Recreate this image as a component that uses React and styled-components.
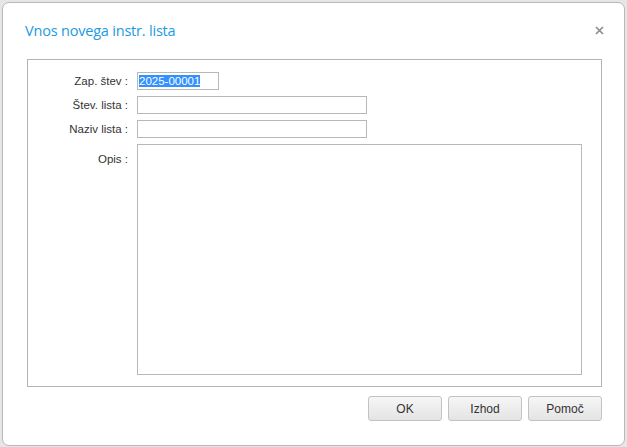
import React, { useEffect, useRef } from "react";
import styled, { createGlobalStyle } from "styled-components";

const GlobalStyle = createGlobalStyle`
  html, body {
    margin: 0;
    padding: 0;
    background: #e6e6e6;
  }
  body {
    font-family: "Liberation Sans", Arial, sans-serif;
    font-size: 11px;
    color: #333;
  }
  * { box-sizing: border-box; }
`;

const Dialog = styled.div`
  margin: 2px 0 0 2px;
  width: 623px;
  height: 444px;
  background: #fff;
  border: 1px solid #b9b9b9;
  border-radius: 7px;
  display: flex;
  flex-direction: column;
  padding: 0 22px 0 24px;
`;

const Header = styled.div`
  height: 56px;
  display: flex;
  align-items: center;
  justify-content: space-between;
  padding-bottom: 2px;
`;

const Title = styled.h1`
  margin: 0 0 0 -2px;
  font-family: "Open Sans", "Noto Sans", sans-serif;
  font-weight: 400;
  font-size: 14.5px;
  color: #1d9ae2;
  letter-spacing: -0.2px;
`;

const Close = styled.button`
  border: none;
  background: none;
  padding: 0;
  margin-right: -3px;
  width: 12px;
  height: 12px;
  display: flex;
  align-items: center;
  justify-content: center;
  cursor: pointer;
`;

const Fieldset = styled.div`
  height: 328px;
  border: 1px solid #b4b4b4;
  padding: 12px 19px 11px 0;
  display: grid;
  grid-template-columns: 100px 1fr;
  grid-template-rows: 18px 18px 18px 1fr;
  column-gap: 9px;
  row-gap: 6px;
`;

const Label = styled.label`
  text-align: right;
  line-height: 18px;
  padding-top: ${(p) => p.$top || 0}px;
  font-size: 11.5px;
  color: #333;
  white-space: nowrap;
`;

const Input = styled.input`
  width: ${(p) => p.$width}px;
  height: 18px;
  border: 1px solid #b8b8b8;
  padding: 0 1px;
  font-family: "Liberation Sans", Arial, sans-serif;
  font-size: 11.5px;
  color: #222;
  outline: none;
  &::selection {
    background: #3390ff;
    color: #fff;
  }
`;

const TextArea = styled.textarea`
  width: 445px;
  height: 231px;
  border: 1px solid #b8b8b8;
  resize: none;
  outline: none;
  font-family: "Liberation Sans", Arial, sans-serif;
  font-size: 11px;
`;

const Footer = styled.div`
  display: flex;
  justify-content: flex-end;
  gap: 6px;
  padding: 9px 0 0;
`;

const Button = styled.button`
  width: 74px;
  height: 25px;
  border: 1px solid #c3c3c3;
  border-radius: 3px;
  background: linear-gradient(#f6f6f6, #e4e4e4);
  font-family: "Liberation Sans", Arial, sans-serif;
  font-size: 12px;
  color: #333;
  cursor: pointer;
`;

export default function App() {
  const firstRef = useRef(null);

  useEffect(() => {
    if (firstRef.current) {
      firstRef.current.focus();
      firstRef.current.select();
    }
  }, []);

  return (
    <>
      <GlobalStyle />
      <Dialog>
        <Header>
          <Title>Vnos novega instr. lista</Title>
          <Close aria-label="Zapri">
            <svg width="9" height="9" viewBox="0 0 9 9">
              <path d="M1 1 L8 8 M8 1 L1 8" stroke="#8a8a8a" strokeWidth="1.6" />
            </svg>
          </Close>
        </Header>
        <Fieldset>
          <Label>Zap. štev :</Label>
          <Input $width={82} ref={firstRef} defaultValue="2025-00001" />
          <Label>Štev. lista :</Label>
          <Input $width={230} />
          <Label>Naziv lista :</Label>
          <Input $width={230} />
          <Label $top={6}>Opis :</Label>
          <TextArea />
        </Fieldset>
        <Footer>
          <Button>OK</Button>
          <Button>Izhod</Button>
          <Button>Pomoč</Button>
        </Footer>
      </Dialog>
    </>
  );
}
